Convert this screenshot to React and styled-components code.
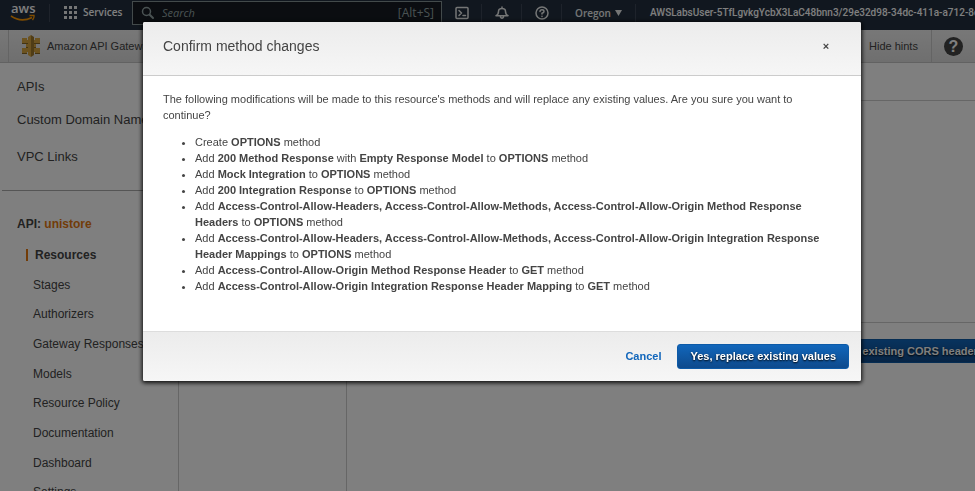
import React from 'react';
import styled, { createGlobalStyle, css } from 'styled-components';

const Global = createGlobalStyle`
  *, *::before, *::after { box-sizing: border-box; }
  html, body, #root { height: 100%; }
  body {
    margin: 0;
    overflow: hidden;
    background: #fff;
    color: #444;
    font: 11px/16px "Liberation Sans", Arial, sans-serif;
  }
  button, input { font: inherit; color: inherit; }
  a { color: inherit; text-decoration: none; }
`;

const Page = styled.div`
  height: 100%;
  display: flex;
  flex-direction: column;
  overflow: hidden;
`;

const TopBar = styled.header`
  display: flex;
  align-items: stretch;
  flex: none;
  height: 30px;
  overflow: hidden;
  background: #232f3e;
  color: #fff;
  font: 500 10px/16px "Open Sans", "Noto Sans", sans-serif;
  white-space: nowrap;
`;

const LogoLink = styled.a`
  flex: none;
  width: 49px;
  padding: 3px 0 0 9px;
`;

const AwsWord = styled.span`
  display: block;
  height: 11px;
  padding-left: 2px;
  font: 600 13px/11px "Open Sans", sans-serif;
`;

const Smile = styled.svg`
  display: block;
  width: 27px;
  height: 8px;
`;

const ServicesButton = styled.button`
  display: flex;
  flex: none;
  gap: 6px;
  width: 83px;
  height: 18px;
  margin-top: 4px;
  padding: 1px 0 0 14px;
  border: 0;
  border-left: 1px solid #3d4757;
  background: none;
  font-weight: 600;
  line-height: 14px;
  cursor: pointer;
`;

const GridIcon = styled.svg`
  width: 13px;
  height: 13px;
  margin-top: 1px;
`;

const SearchBox = styled.label`
  display: flex;
  flex: none;
  align-items: center;
  width: 310px;
  height: 24px;
  margin-top: 1px;
  padding: 0 7px 0 8px;
  gap: 7px;
  border: 1px solid #879596;
  background: #161b22;
  color: #95a5a6;
`;

const SearchInput = styled.input`
  flex: 1;
  min-width: 0;
  padding: 0;
  border: 0;
  outline: 0;
  background: none;
  font-size: 11px;
  &::placeholder { color: #95a5a6; font-style: italic; opacity: 1; }
`;

const Shortcut = styled.kbd`
  font: 12px/16px "Open Sans", sans-serif;
`;

const LineIcon = styled.svg`
  display: block;
  width: 14px;
  height: 14px;
  fill: none;
  stroke: currentColor;
  stroke-width: 1.5;
  stroke-linecap: round;
  stroke-linejoin: round;
`;

const TopButton = styled.button`
  display: flex;
  flex: none;
  justify-content: center;
  gap: 4px;
  width: ${(p) => (p.$wide ? 74 : 40)}px;
  margin-top: 4px;
  padding: ${(p) => (p.$wide ? 1 : 2)}px 0 0;
  border: 0;
  border-right: 1px solid #3d4757;
  background: none;
  color: #eaeded;
  font-weight: 600;
  cursor: pointer;
`;

const Caret = styled.svg`
  width: 7px;
  height: 6px;
  margin-top: 5px;
  fill: currentColor;
`;

const Account = styled.a`
  flex: 1;
  min-width: 0;
  overflow: hidden;
  padding: 5px 0 0 14px;
  font: 500 10px/16px Roboto, "Open Sans", sans-serif;
`;

const ServiceBar = styled.div`
  display: flex;
  flex: none;
  height: 33px;
  border-bottom: 1px solid #c4c4c4;
  background: linear-gradient(#f0f0f0, #dedede);
`;

const ServiceName = styled.a`
  display: flex;
  flex: 1;
  align-items: center;
  gap: 6px;
  margin-left: 8px;
  padding-left: 12px;
  border-left: 1px solid #c8c8c8;
`;

const GatewayIcon = styled.svg`
  width: 20px;
  height: 22px;
`;

const HintsButton = styled.button`
  width: 71px;
  padding: 0 0 0 8px;
  border: 0;
  border-right: 1px solid #c8c8c8;
  background: none;
  text-align: left;
`;

const HelpButton = styled.button`
  width: 43px;
  padding: 0;
  border: 0;
  background: none;
`;

const HelpDot = styled.span`
  display: block;
  width: 19px;
  margin: 0 auto;
  border-radius: 50%;
  background: #444;
  color: #fff;
  font: bold 16px/19px "Liberation Sans", Arial, sans-serif;
`;

const Workspace = styled.div`
  display: flex;
  flex: 1;
  min-height: 0;
  overflow: hidden;
`;

const Sidebar = styled.nav`
  flex: none;
  width: 179px;
  border-right: 1px solid #ccc;
  font-size: 12px;
  white-space: nowrap;
  overflow: hidden;
`;

const MainLinks = styled.ul`
  margin: 0 0 0 2px;
  padding: 16px 0 25px 15px;
  border-bottom: 1px solid #aaa;
  list-style: none;
  font-size: 13px;
  li + li { margin-top: 17px; }
  li:last-child { margin-top: 21px; }
`;

const ApiTitle = styled.h2`
  margin: 25px 0 15px 17px;
  font-size: 12px;
  line-height: 16px;
`;

const ApiLink = styled.a`
  color: #e47911;
`;

const ApiLinks = styled.ul`
  display: grid;
  grid-auto-rows: 30px 29px 30px;
  margin: 0;
  padding: 0;
  list-style: none;
`;

const NavLink = styled.a`
  display: block;
  margin-left: 33px;
  ${(p) => p.$current && css`
    width: 100px;
    margin-left: 26px;
    padding-left: 7px;
    border-left: 2px solid #e47911;
    font-weight: bold;
    line-height: 12px;
    margin-top: 2px;
  `}
`;

const ResourceTree = styled.section`
  flex: none;
  width: 168px;
  border-right: 1px solid #ccc;
`;

const MethodPane = styled.main`
  flex: 1;
  min-width: 0;
`;

const PaneTop = styled.div`
  height: 38px;
  border-bottom: 1px solid #ccc;
`;

const PaneBody = styled.div`
  height: 222px;
  border-bottom: 1px solid #ccc;
`;

const PaneActions = styled.div`
  display: flex;
  justify-content: flex-end;
  padding-top: 16px;
`;

const primary = css`
  border: 1px solid #0d5aa7;
  background: linear-gradient(#1166bb, #0e4a8c);
  color: #fff;
  font-weight: bold;
  text-shadow: 0 1px 2px #000;
  white-space: nowrap;
`;

const CorsButton = styled.button`
  ${primary}
  flex: none;
  height: 24px;
  margin-right: -22px;
  padding: 0 12px;
`;

const Backdrop = styled.div`
  position: fixed;
  inset: 0;
  display: flex;
  align-items: flex-start;
  padding: 22px 114px 0 143px;
  background: rgba(0, 0, 0, 0.5);
`;

const Dialog = styled.section`
  flex: 1;
  min-width: 0;
  overflow: hidden;
  border-radius: 2px;
  background: #fff;
  box-shadow: 0 1px 4px 1px rgba(0, 0, 0, 0.9);
`;

const DialogHeader = styled.header`
  display: flex;
  align-items: center;
  justify-content: space-between;
  height: 54px;
  padding: 0 28px 5px 20px;
  border-bottom: 1px solid #ccc;
  background: linear-gradient(#ececec, #f6f6f6);
`;

const DialogTitle = styled.h1`
  margin: 0;
  font-size: 14px;
  font-weight: normal;
  line-height: 20px;
`;

const CloseButton = styled.button`
  width: 14px;
  padding: 0;
  border: 0;
  background: none;
  font-weight: bold;
`;

const DialogBody = styled.div`
  padding: 15px 20px 37px;
`;

const Intro = styled.p`
  margin: 0;
`;

const Changes = styled.ul`
  margin: 11px 0 0;
  padding-left: 32px;
`;

const DialogFooter = styled.footer`
  display: flex;
  align-items: center;
  justify-content: flex-end;
  gap: 16px;
  height: 50px;
  padding: 0 12px;
  border-top: 1px solid #ddd;
  background: linear-gradient(#ececec, #f6f6f6);
`;

const CancelButton = styled.button`
  padding: 0 0 1px;
  border: 0;
  background: none;
  color: #1166bb;
  font-weight: bold;
`;

const ConfirmButton = styled.button`
  ${primary}
  height: 25px;
  padding: 0 12px 1px;
  border-radius: 3px;
`;

const mainLinks = ['APIs', 'Custom Domain Names', 'VPC Links'];
const apiLinks = ['Resources', 'Stages', 'Authorizers', 'Gateway Responses', 'Models', 'Resource Policy', 'Documentation', 'Dashboard', 'Settings'];

export default function App() {
  return (
    <>
      <Global />
      <Page>
        <TopBar>
          <LogoLink href="#" aria-label="AWS home">
            <AwsWord>aws</AwsWord>
            <Smile viewBox="0 0 27 8" fill="none" stroke="#ff9900" strokeWidth="1.6">
              <path d="M2 2 Q12 9 23 3.5" />
              <path d="M20.5 1.5 H25 Q25.5 3.5 23.5 6" strokeWidth="1.3" />
            </Smile>
          </LogoLink>
          <ServicesButton>
            <GridIcon viewBox="0 0 13 13" fill="#eaeded">
              {[0, 5, 10].map((y) => [0, 5, 10].map((x) => <rect key={`${x}-${y}`} x={x} y={y} width="3" height="3" />))}
            </GridIcon>
            Services
          </ServicesButton>
          <SearchBox>
            <LineIcon viewBox="0 0 14 14">
              <circle cx="5.5" cy="5.5" r="4" />
              <path d="M8.7 8.7 L12 12" strokeWidth="2" />
            </LineIcon>
            <SearchInput type="search" aria-label="Search" placeholder="Search" />
            <Shortcut>[Alt+S]</Shortcut>
          </SearchBox>
          <TopButton aria-label="CloudShell">
            <LineIcon viewBox="0 0 14 14">
              <rect x="1" y="1.5" width="12" height="11" rx="1" />
              <path d="M4 4.5 L6.5 7 L4 9.5 M8 9.5 H10.5" />
            </LineIcon>
          </TopButton>
          <TopButton aria-label="Notifications">
            <LineIcon viewBox="0 0 14 14">
              <path d="M1 9.7 Q3.5 8.5 3.5 5.5 Q3.5 2.5 7 2.5 Q10.5 2.5 10.5 5.5 Q10.5 8.5 13 9.7 Z M5.5 11 Q7 13.5 8.5 11 M7 1 V2.5" />
            </LineIcon>
          </TopButton>
          <TopButton aria-label="Help">
            <LineIcon viewBox="0 0 14 14">
              <circle cx="7" cy="7" r="6" />
              <path d="M5 5.5 Q5 3.8 7 3.8 Q9 3.8 9 5.5 Q9 6.5 7 7.3 V8 M7 10.3 V10.4" />
            </LineIcon>
          </TopButton>
          <TopButton $wide>
            Oregon
            <Caret viewBox="0 0 7 6"><path d="M0 0 H7 L3.5 6 Z" /></Caret>
          </TopButton>
          <Account href="#">AWSLabsUser-5TfLgvkgYcbX3LaC48bnn3/29e32d98-34dc-411a-a712-8c...</Account>
        </TopBar>

        <ServiceBar>
          <ServiceName href="#">
            <GatewayIcon viewBox="0 0 20 22">
              <path fill="#d9a741" d="M1 3h5v2h1v4H1zM19 3h-5v2h-1v4h6zM1 13h6v4H6v2H1zM19 13h-6v4h1v2h5zM5 9h10v4H5z" />
              <path fill="#876929" d="M1 8h6v1H1zM13 8h6v1h-6zM1 18h5v1H1zM14 18h5v1h-5zM5 12h10v1H5z" />
              <path fill="#d9a741" d="M7 2l3-2v22l-3-2z" />
              <path fill="#a17a2c" d="M10 0l3 2v18l-3 2z" />
            </GatewayIcon>
            Amazon API Gateway
          </ServiceName>
          <HintsButton>Hide hints</HintsButton>
          <HelpButton aria-label="Help topics"><HelpDot>?</HelpDot></HelpButton>
        </ServiceBar>

        <Workspace>
          <Sidebar>
            <MainLinks>
              {mainLinks.map((t) => <li key={t}><a href="#">{t}</a></li>)}
            </MainLinks>
            <ApiTitle>API: <ApiLink href="#">unistore</ApiLink></ApiTitle>
            <ApiLinks>
              {apiLinks.map((t, i) => <li key={t}><NavLink href="#" $current={i === 0}>{t}</NavLink></li>)}
            </ApiLinks>
          </Sidebar>
          <ResourceTree />
          <MethodPane>
            <PaneTop />
            <PaneBody />
            <PaneActions>
              <CorsButton>Enable CORS and replace existing CORS headers</CorsButton>
            </PaneActions>
          </MethodPane>
        </Workspace>
      </Page>

      <Backdrop>
        <Dialog role="dialog" aria-modal="true" aria-labelledby="dialog-title">
          <DialogHeader>
            <DialogTitle id="dialog-title">Confirm method changes</DialogTitle>
            <CloseButton aria-label="Close">×</CloseButton>
          </DialogHeader>
          <DialogBody>
            <Intro>
              The following modifications will be made to this resource's methods and will replace any existing values. Are you sure you want to continue?
            </Intro>
            <Changes>
              <li>Create <b>OPTIONS</b> method</li>
              <li>Add <b>200 Method Response</b> with <b>Empty Response Model</b> to <b>OPTIONS</b> method</li>
              <li>Add <b>Mock Integration</b> to <b>OPTIONS</b> method</li>
              <li>Add <b>200 Integration Response</b> to <b>OPTIONS</b> method</li>
              <li>Add <b>Access-Control-Allow-Headers, Access-Control-Allow-Methods, Access-Control-Allow-Origin Method Response Headers</b> to <b>OPTIONS</b> method</li>
              <li>Add <b>Access-Control-Allow-Headers, Access-Control-Allow-Methods, Access-Control-Allow-Origin Integration Response Header Mappings</b> to <b>OPTIONS</b> method</li>
              <li>Add <b>Access-Control-Allow-Origin Method Response Header</b> to <b>GET</b> method</li>
              <li>Add <b>Access-Control-Allow-Origin Integration Response Header Mapping</b> to <b>GET</b> method</li>
            </Changes>
          </DialogBody>
          <DialogFooter>
            <CancelButton>Cancel</CancelButton>
            <ConfirmButton>Yes, replace existing values</ConfirmButton>
          </DialogFooter>
        </Dialog>
      </Backdrop>
    </>
  );
}
